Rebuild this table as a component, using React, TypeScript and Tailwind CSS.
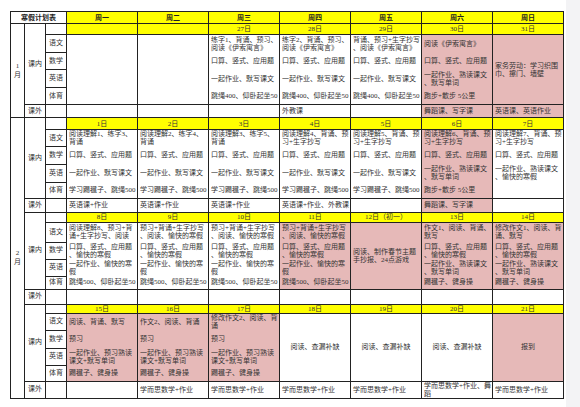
import clsx from "clsx";

type Day = {
  date: string;
  pink?: boolean;
  rows?: string[][];
  merged?: string[];
  center?: boolean;
  out?: string[];
  outPink?: boolean;
};

type Block = { month?: string; monthSpan?: number; h: number[]; days: Day[] };

const weekdays = ["周一", "周二", "周三", "周四", "周五", "周六", "周日"];
const subjects = ["语文", "数学", "英语", "体育"];

// repeated bits
const calc = ["口算、竖式、应用题"];
const calc2 = ["口算、竖式、应用题", "、愉快的寒假"];
const eng = ["一起作业、默写课文"];
const jump400 = ["跳绳400、仰卧起坐50"];
const kick500 = ["学习踢毽子、跳绳500"];
const engRead = ["一起作业、熟读课文", "、默写单词"];
const engHappy = ["一起作业、愉快的寒", "假"];
const jump500 = ["跳绳500、仰卧起坐50"];
const kick = ["踢毽子、健身操"];
const engPre = ["一起作业、预习熟读", "课文+默写单词"];
const xes = ["学而思数学+作业"];

const blocks: Block[] = [
  {
    month: "1月",
    monthSpan: 6,
    h: [11, 18, 17, 18, 17, 13],
    days: [
      { date: "", merged: [] },
      { date: "", merged: [] },
      { date: "27日", rows: [["练字1、背诵、预习、", "阅读《伊索寓言》"], calc, eng, jump400] },
      { date: "28日", rows: [["练字2、背诵、预习、", "阅读《伊索寓言》"], calc, eng, jump400], out: ["外教课"] },
      { date: "29日", rows: [["背诵、预习+生字抄写", "、阅读《伊索寓言》"], calc, eng, jump400] },
      {
        date: "30日",
        pink: true,
        rows: [["阅读《伊索寓言》"], calc, engRead, ["跑步+散步 5公里"]],
        out: ["舞蹈课、写字课"],
        outPink: true,
      },
      {
        date: "31日",
        pink: true,
        merged: ["家务劳动：学习织围", "巾、擦门、墙壁"],
        out: ["英语课、英语作业"],
        outPink: true,
      },
    ],
  },
  {
    month: "2月",
    monthSpan: 18,
    h: [12, 16, 18, 18, 16, 14],
    days: [
      { date: "1日", rows: [["阅读理解1、练字3、", "背诵"], calc, eng, kick500], out: ["英语课+作业"] },
      { date: "2日", rows: [["阅读理解2、练字4、", "背诵"], calc, eng, kick500], out: ["英语课+作业"] },
      { date: "3日", rows: [["阅读理解3、练字5、", "背诵"], calc, eng, kick500], out: ["英语课+作业"] },
      { date: "4日", rows: [["阅读理解4、背诵、预", "习+生字抄写"], calc, eng, kick500], out: ["英语课+作业、外教课"] },
      { date: "5日", rows: [["阅读理解5、背诵、预", "习+生字抄写"], calc, eng, kick500] },
      {
        date: "6日",
        pink: true,
        rows: [["阅读理解6、背诵、预", "习+生字抄写"], calc, engRead, ["跑步+散步 5公里"]],
        out: ["舞蹈课、写字课"],
        outPink: true,
      },
      { date: "7日", rows: [["阅读理解7、背诵、预", "习+生字抄写"], calc, ["一起作业、熟读课文", "、愉快的寒假"], []] },
    ],
  },
  {
    h: [10, 20, 17, 17, 13, 15],
    days: [
      { date: "8日", rows: [["阅读理解8、预习+背", "诵+生字抄写、阅读"], calc2, engHappy, jump500] },
      { date: "9日", rows: [["预习+背诵+生字抄写", "、阅读、愉快的寒假"], calc2, engHappy, jump500] },
      { date: "10日", rows: [["预习+背诵+生字抄写", "、阅读、愉快的寒假"], calc2, engHappy, jump500] },
      { date: "11日", pink: true, rows: [["预习+背诵+生字抄写", "、阅读、愉快的寒假"], calc2, engHappy, jump500] },
      { date: "12日（初一）", pink: true, merged: ["阅读、制作春节主题", "手抄报、24点游戏"] },
      { date: "13日", pink: true, rows: [["作文1、阅读、背诵、", "默写"], calc2, engRead, kick] },
      { date: "14日", pink: true, rows: [["修改作文1、阅读、背", "诵、默写"], calc2, engRead, kick] },
    ],
  },
  {
    h: [9, 17, 18, 17, 16, 15],
    days: [
      { date: "15日", pink: true, rows: [["阅读、背诵、默写"], ["预习"], engPre, kick] },
      { date: "16日", pink: true, rows: [["作文2、阅读、背诵"], ["预习"], engPre, kick], out: xes },
      { date: "17日", pink: true, rows: [["修改作文2、阅读、背", "诵"], ["预习"], engPre, kick], out: xes },
      { date: "18日", merged: ["阅读、查漏补缺"], center: true, out: xes },
      { date: "19日", merged: ["阅读、查漏补缺"], center: true, out: xes },
      { date: "20日", merged: ["阅读、查漏补缺"], center: true, out: ["学而思数学+作业、舞", "蹈"] },
      { date: "21日", pink: true, merged: ["报到"], center: true, out: xes },
    ],
  },
];

const line = "border border-[#222] p-0";
const pink = "bg-[#e6b9b8]";

function Lines({ lines }: { lines: string[] }) {
  return (
    <div className="overflow-hidden whitespace-nowrap leading-[8px]">
      {lines.map((l, i) => (
        <div key={i}>{l}</div>
      ))}
    </div>
  );
}

function BlockRows({ block }: { block: Block }) {
  const { h, days } = block;
  return (
    <>
      <tr style={{ height: h[0] }}>
        {block.month && (
          <td rowSpan={block.monthSpan} className={clsx(line, "text-center align-middle leading-[9px]")}>
            <div>{block.month.slice(0, 1)}</div>
            <div>{block.month.slice(1)}</div>
          </td>
        )}
        <td rowSpan={5} className={clsx(line, "text-center align-middle")}>
          课内
        </td>
        <td className={line}></td>
        {days.map((d, i) => (
          <td key={i} className={clsx(line, "bg-[#ffff00] text-center leading-[8px]")}>
            {d.date}
          </td>
        ))}
      </tr>
      {subjects.map((s, r) => (
        <tr key={s} style={{ height: h[r + 1] }}>
          <td className={clsx(line, "text-center align-middle")}>{s}</td>
          {days.map((d, i) => {
            if (d.merged) {
              if (r > 0) return null;
              return (
                <td
                  key={i}
                  rowSpan={4}
                  className={clsx(
                    line,
                    "align-middle",
                    d.center ? "text-center" : "pl-[2px]",
                    d.pink ? pink : "bg-white",
                  )}
                >
                  <Lines lines={d.merged} />
                </td>
              );
            }
            return (
              <td
                key={i}
                className={clsx(
                  "border-x border-[#222] p-0 pl-[2px] align-middle",
                  r === 0 && "border-t",
                  r === 3 && "border-b",
                  d.pink ? pink : "bg-white",
                )}
              >
                <Lines lines={d.rows?.[r] ?? []} />
              </td>
            );
          })}
        </tr>
      ))}
      <tr style={{ height: h[5] }}>
        <td className={clsx(line, "text-center align-middle")}>课外</td>
        <td className={line}></td>
        {days.map((d, i) => (
          <td key={i} className={clsx(line, "pl-[2px] align-middle", d.outPink ? pink : "bg-white")}>
            <Lines lines={d.out ?? []} />
          </td>
        ))}
      </tr>
    </>
  );
}

export default function App() {
  return (
    <div className="flex h-[407px] w-[580px] bg-white font-['Liberation_Serif','Noto_Sans_CJK_SC',serif] text-[7px] text-[#333]">
      <div className="flex-1 pl-[10px] pt-[11px]">
        <table className="w-[553px] table-fixed border-collapse">
          <colgroup>
            <col className="w-[14px]" />
            <col className="w-[21px]" />
            <col className="w-[21px]" />
            {weekdays.map((w) => (
              <col key={w} className="w-[71px]" />
            ))}
          </colgroup>
          <tbody>
            <tr className="h-[12px]">
              <td colSpan={3} className={clsx(line, "text-center font-bold leading-[8px] text-[#222]")}>
                寒假计划表
              </td>
              {weekdays.map((w) => (
                <td key={w} className={clsx(line, "bg-[#ffff00] text-center font-bold leading-[8px] text-[#222]")}>
                  {w}
                </td>
              ))}
            </tr>
            {blocks.map((b, i) => (
              <BlockRows key={i} block={b} />
            ))}
          </tbody>
        </table>
      </div>
      <div className="w-[14px] bg-[#f3f3f5]"></div>
    </div>
  );
}
